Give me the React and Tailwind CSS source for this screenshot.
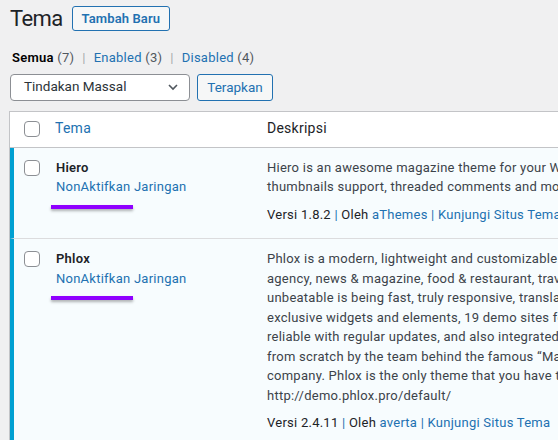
const font = { fontFamily: 'Roboto, "Noto Sans", sans-serif' }

const Checkbox = () => (
  <span className="block h-4 w-4 rounded-[4px] border border-[#8c8f94] bg-white" />
)

const Marker = () => (
  <div className="ml-[-5px] h-1 w-[82px] bg-[#8f00ff] shadow-[0_2px_3px_rgba(0,0,0,0.3)]" />
)

const Meta = ({ version, author }) => (
  <div className="mt-[8px] whitespace-nowrap text-[#1d2327]">
    Versi {version} <span className="text-[#2271b1]">|</span> Oleh{' '}
    <span className="text-[#2271b1]">{author}</span>{' '}
    <span className="text-[#2271b1]">|</span>{' '}
    <span className="text-[#2271b1]">Kunjungi Situs Tema</span>
  </div>
)

const hieroLines = [
  'Hiero is an awesome magazine theme for your WordPress site. It comes with featured images,',
  'thumbnails support, threaded comments and more.',
]

const phloxLines = [
  'Phlox is a modern, lightweight and customizable WordPress theme designed for almost any website:',
  'agency, news & magazine, food & restaurant, travel, portfolio and more. What makes Phlox',
  'unbeatable is being fast, truly responsive, translation ready, SEO friendly and packed with',
  'exclusive widgets and elements, 19 demo sites for one click import. Phlox is stable,',
  'reliable with regular updates, and also integrated with Elementor page builder. Built',
  'from scratch by the team behind the famous “Master Slider”, averta is an elite author',
  'company. Phlox is the only theme that you have to use for your next project.',
  'http://demo.phlox.pro/default/',
]

const ThemeRow = ({ name, lines, version, author, last }) => (
  <div className={`flex border-l-4 border-[#00a0d2] bg-[#f7fcfe] ${last ? '' : 'border-b border-b-[#dcdcde]'}`}>
    <div className="w-[42px] shrink-0 pl-[10px] pt-[12px]">
      <Checkbox />
    </div>
    <div className="w-[201px] shrink-0 pt-[10px]">
      <div className="font-semibold text-[#1d2327]">{name}</div>
      <div className="text-[#2271b1]">NonAktifkan Jaringan</div>
      <div className="mt-[8px]">
        <Marker />
      </div>
    </div>
    <div className="min-w-0 flex-1 pt-[10px] pb-[14px] pl-[10px]">
      {lines.map((l) => (
        <div key={l} className="whitespace-nowrap text-[#3c434a]">{l}</div>
      ))}
      <Meta version={version} author={author} />
    </div>
  </div>
)

export default function App() {
  return (
    <div
      className="h-[440px] w-[558px] overflow-hidden bg-[#f0f0f1] pl-[10px] text-[13px] leading-[19.5px] tracking-[0.25px]"
      style={font}
    >
      {/* header */}
      <div className="flex items-center gap-[9px] pt-[6px]">
        <h1 className="text-[22px] leading-[24px] font-normal tracking-[-0.6px] text-[#1d2327]">Tema</h1>
        <button className="h-[25px] rounded-[3px] border border-[#2271b1] bg-[#f6f7f7] px-[9px] text-[13px] font-semibold leading-[23px] tracking-[0.1px] text-[#2271b1]">
          Tambah Baru
        </button>
      </div>

      {/* filters */}
      <div className="mt-[17px] whitespace-nowrap pl-[2px] text-[#50575e]">
        <span className="font-semibold text-black">Semua</span> (7)
        <span className="mx-[8px] text-[#a7aaad]">|</span>
        <span className="text-[#2271b1]">Enabled</span> (3)
        <span className="mx-[8px] text-[#a7aaad]">|</span>
        <span className="text-[#2271b1]">Disabled</span> (4)
      </div>

      {/* bulk actions */}
      <div className="mt-[6px] flex gap-[7px]">
        <div className="flex h-[27px] w-[180px] items-center justify-between rounded-[4px] border border-[#8c8f94] bg-white pl-[13px] pr-[8px] text-[13.5px] tracking-[0px] text-[#2c3338]">
          <span>Tindakan Massal</span>
          <svg width="16" height="16" viewBox="0 0 16 16" fill="none">
            <path d="M4 6l4 4 4-4" stroke="#50575e" strokeWidth="1.6" />
          </svg>
        </div>
        <button className="h-[27px] w-[76px] rounded-[3px] border border-[#2271b1] bg-[#f6f7f7] text-[13.5px] leading-[25px] tracking-[0px] text-[#2271b1]">
          Terapkan
        </button>
      </div>

      {/* table */}
      <div className="ml-[-1px] mt-[10px] w-[700px] border border-[#c3c4c7]">
        <div className="flex h-[36px] items-center border-b border-[#c3c4c7] bg-white">
          <div className="w-[45px] shrink-0 pl-[14px]">
            <Checkbox />
          </div>
          <div className="w-[202px] shrink-0 text-[14px] text-[#2271b1]">Tema</div>
          <div className="pl-[10px] text-[14px] text-[#1d2327]">Deskripsi</div>
        </div>
        <ThemeRow name="Hiero" lines={hieroLines} version="1.8.2" author="aThemes" />
        <ThemeRow name="Phlox" lines={phloxLines} version="2.4.11" author="averta" last />
      </div>
    </div>
  )
}
